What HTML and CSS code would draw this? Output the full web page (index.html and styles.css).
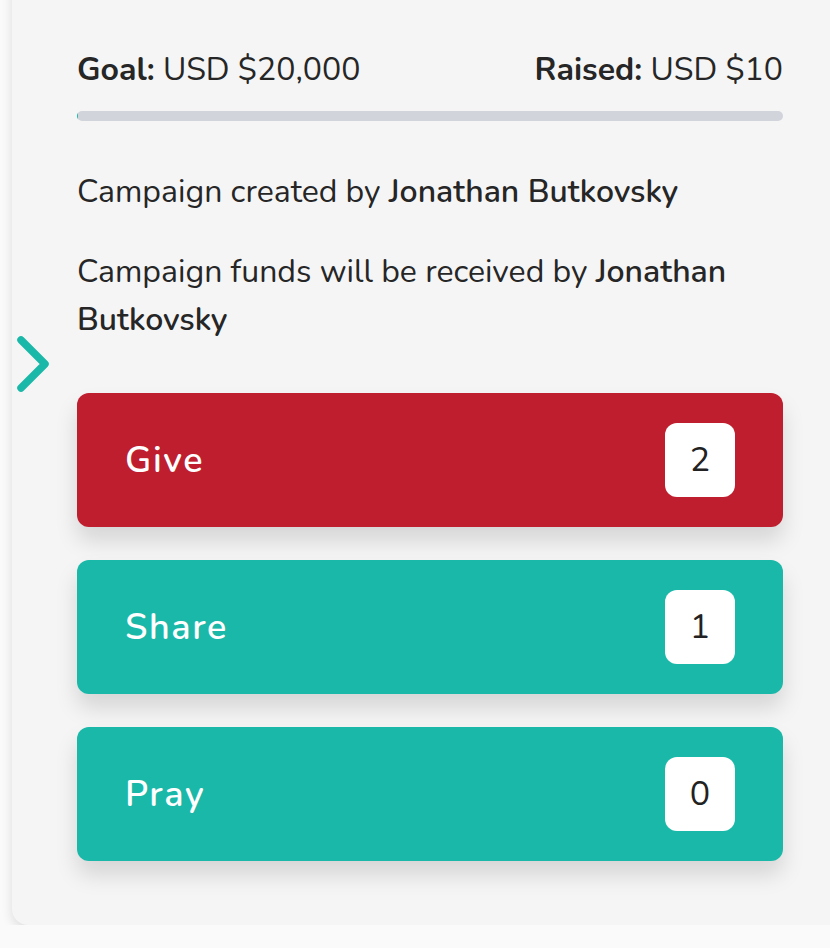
FILE: index.html
```html
<!DOCTYPE html>
<html lang="en">

<head>
  <meta charset="UTF-8">
  <meta name="viewport" content="width=device-width, initial-scale=1.0">
  <title>campaign</title>
  <link rel="stylesheet" href="styles.css">
</head>

<body>
  <section class="campaign">
    <a class="toggle" href="#">
      <svg width="40" height="60" viewBox="0 0 40 60"><path d="M6 6 L30 30 L6 54" fill="none" stroke="#1ab8a8" stroke-width="7.5" stroke-linecap="round" stroke-linejoin="round"/></svg>
    </a>
    <div class="inner">
      <div class="totals">
        <p><b>Goal:</b> USD $20,000</p>
        <p><b>Raised:</b> USD $10</p>
      </div>
      <div class="bar"><div class="fill" style="width: 0.05%"></div></div>

      <p class="info">Campaign created by <b>Jonathan Butkovsky</b></p>
      <p class="info">Campaign funds will be received by <b>Jonathan Butkovsky</b></p>

      <div class="actions">
        <a class="action give" href="#"><span>Give</span><span class="count">2</span></a>
        <a class="action share" href="#"><span>Share</span><span class="count">1</span></a>
        <a class="action pray" href="#"><span>Pray</span><span class="count">0</span></a>
      </div>
    </div>
  </section>
</body>

</html>
```

FILE: styles.css
```css
*{margin: 0; padding: 0; box-sizing: border-box;}
a{text-decoration: none;}
body{
  background-color: #fafafa;
  font-family: "Nunito", "Lato", sans-serif;
  color: #262626;
  overflow: hidden;
}

.campaign{
  margin: -40px -40px 0 12px;
  height: 965px;
  background-color: #f5f5f5;
  border-radius: 16px;
  box-shadow: 0 4px 12px rgba(0,0,0,.12);
  position: relative;
}
.toggle{
  position: absolute;
  left: 3px;
  top: 374px;
}
.inner{
  padding: 90px 87px 0 65px;
}

/*목표 금액*/
.totals{
  display: flex;
  justify-content: space-between;
  font-size: 32px;
  line-height: 40px;
}
.totals b{font-weight: 700;}
.bar{
  margin-top: 21px;
  height: 10px;
  border-radius: 5px;
  background-color: #d1d5db;
  overflow: hidden;
}
.fill{
  height: 100%;
  background-color: #1ab8a8;
}

/*캠페인 정보*/
.info{
  font-size: 32px;
  line-height: 48px;
  margin-top: 47px;
}
.info + .info{margin-top: 32px;}
.info b{font-weight: 600;}

/*버튼*/
.actions{
  margin-top: 49px;
  display: flex;
  flex-direction: column;
  gap: 33px;
}
.action{
  height: 134px;
  border-radius: 12px;
  padding: 0 48px;
  display: flex;
  align-items: center;
  justify-content: space-between;
  color: #fff;
  font-size: 36px;
  font-weight: 600;
  letter-spacing: 1.6px;
  box-shadow: 0 14px 22px rgba(0,0,0,.13);
}
.give{background-color: #be1e2d;}
.share,
.pray{background-color: #1ab8a8;}
.count{
  width: 70px;
  height: 74px;
  border-radius: 12px;
  background-color: #fff;
  color: #222;
  font-weight: 400;
  letter-spacing: 0;
  display: flex;
  align-items: center;
  justify-content: center;
  font-size: 34px;
}
```
